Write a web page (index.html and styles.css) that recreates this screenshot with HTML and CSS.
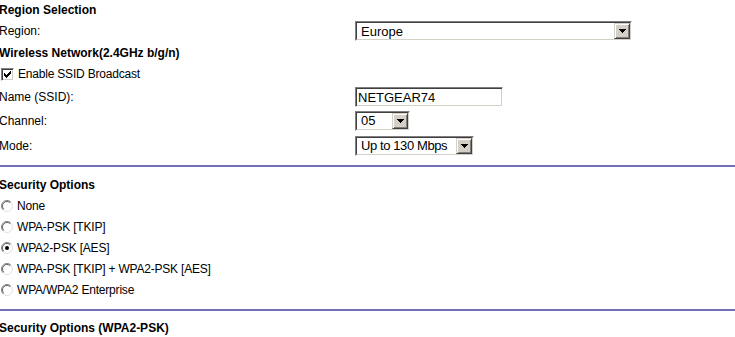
FILE: index.html
```html
<!DOCTYPE html>
<html lang="en">
<head>
  <meta charset="UTF-8">
  <title>Wireless Settings</title>
  <link rel="stylesheet" href="styles.css">
</head>
<body>

  <div class="page">
    <div class="row head r-1">Region Selection</div>
    <div class="row r-2">
      <span class="label">Region:</span>
      <div class="combo combo-region">
        <div class="combo-inner">
          <span class="combo-value big">Europe</span>
          <span class="combo-btn">
            <svg width="7" height="4" viewBox="0 0 7 4"><path d="M0 0h7v1h-1v1h-1v1h-1v1h-1v-1h-1v-1h-1v-1h-1z" fill="#000"/></svg>
          </span>
        </div>
      </div>
    </div>
    <div class="row head r-3">Wireless Network(2.4GHz b/g/n)</div>
    <div class="row r-4">
      <span class="check">
        <svg width="7" height="7" viewBox="0 0 7 7"><path d="M6 0h1v1h-1z M5 1h2v1h-2z M0 2h1v1h-1z M4 2h3v1h-3z M0 3h2v1h-2z M3 3h3v1h-3z M0 4h5v1h-5z M1 5h3v1h-3z M2 6h1v1h-1z" fill="#000"/></svg>
      </span>
      <span class="opt-text">Enable SSID Broadcast</span>
    </div>
    <div class="row r-5">
      <span class="label">Name (SSID):</span>
      <input class="text-box" type="text" value="NETGEAR74" readonly>
    </div>
    <div class="row r-6">
      <span class="label">Channel:</span>
      <div class="combo combo-channel">
        <div class="combo-inner">
          <span class="combo-value big">05</span>
          <span class="combo-btn">
            <svg width="7" height="4" viewBox="0 0 7 4"><path d="M0 0h7v1h-1v1h-1v1h-1v1h-1v-1h-1v-1h-1v-1h-1z" fill="#000"/></svg>
          </span>
        </div>
      </div>
    </div>
    <div class="row r-7">
      <span class="label">Mode:</span>
      <div class="combo combo-mode">
        <div class="combo-inner">
          <span class="combo-value big tight">Up to 130 Mbps</span>
          <span class="combo-btn">
            <svg width="7" height="4" viewBox="0 0 7 4"><path d="M0 0h7v1h-1v1h-1v1h-1v1h-1v-1h-1v-1h-1v-1h-1z" fill="#000"/></svg>
          </span>
        </div>
      </div>
    </div>

    <div class="rule rule-1"></div>

    <div class="row head r-sec">Security Options</div>
    <div class="row radio-row">
      <svg class="radio" width="12" height="12" viewBox="0 0 12 12">
        <circle cx="6" cy="6" r="5.5" fill="#fff"/>
        <path d="M2.1 9.9A5.5 5.5 0 0 1 9.9 2.1" stroke="#808080" fill="none"/>
        <path d="M9.9 2.1A5.5 5.5 0 0 1 2.1 9.9" stroke="#e4e2dc" fill="none"/>
        <path d="M2.8 9.2A4.5 4.5 0 0 1 9.2 2.8" stroke="#404040" fill="none" stroke-width="0.8"/>
      </svg>
      <span class="opt-text">None</span>
    </div>
    <div class="row radio-row">
      <svg class="radio" width="12" height="12" viewBox="0 0 12 12">
        <circle cx="6" cy="6" r="5.5" fill="#fff"/>
        <path d="M2.1 9.9A5.5 5.5 0 0 1 9.9 2.1" stroke="#808080" fill="none"/>
        <path d="M9.9 2.1A5.5 5.5 0 0 1 2.1 9.9" stroke="#e4e2dc" fill="none"/>
        <path d="M2.8 9.2A4.5 4.5 0 0 1 9.2 2.8" stroke="#404040" fill="none" stroke-width="0.8"/>
      </svg>
      <span class="opt-text">WPA-PSK [TKIP]</span>
    </div>
    <div class="row radio-row">
      <svg class="radio" width="12" height="12" viewBox="0 0 12 12">
        <circle cx="6" cy="6" r="5.5" fill="#fff"/>
        <path d="M2.1 9.9A5.5 5.5 0 0 1 9.9 2.1" stroke="#808080" fill="none"/>
        <path d="M9.9 2.1A5.5 5.5 0 0 1 2.1 9.9" stroke="#e4e2dc" fill="none"/>
        <path d="M2.8 9.2A4.5 4.5 0 0 1 9.2 2.8" stroke="#404040" fill="none" stroke-width="0.8"/>
        <circle cx="6" cy="6" r="2" fill="#000"/>
      </svg>
      <span class="opt-text">WPA2-PSK [AES]</span>
    </div>
    <div class="row radio-row">
      <svg class="radio" width="12" height="12" viewBox="0 0 12 12">
        <circle cx="6" cy="6" r="5.5" fill="#fff"/>
        <path d="M2.1 9.9A5.5 5.5 0 0 1 9.9 2.1" stroke="#808080" fill="none"/>
        <path d="M9.9 2.1A5.5 5.5 0 0 1 2.1 9.9" stroke="#e4e2dc" fill="none"/>
        <path d="M2.8 9.2A4.5 4.5 0 0 1 9.2 2.8" stroke="#404040" fill="none" stroke-width="0.8"/>
      </svg>
      <span class="opt-text">WPA-PSK [TKIP] + WPA2-PSK [AES]</span>
    </div>
    <div class="row radio-row">
      <svg class="radio" width="12" height="12" viewBox="0 0 12 12">
        <circle cx="6" cy="6" r="5.5" fill="#fff"/>
        <path d="M2.1 9.9A5.5 5.5 0 0 1 9.9 2.1" stroke="#808080" fill="none"/>
        <path d="M9.9 2.1A5.5 5.5 0 0 1 2.1 9.9" stroke="#e4e2dc" fill="none"/>
        <path d="M2.8 9.2A4.5 4.5 0 0 1 9.2 2.8" stroke="#404040" fill="none" stroke-width="0.8"/>
      </svg>
      <span class="opt-text">WPA/WPA2 Enterprise</span>
    </div>

    <div class="rule rule-2"></div>

    <div class="row head r-last">Security Options (WPA2-PSK)</div>
  </div>

</body>
</html>
```

FILE: styles.css
```css
body {
  margin: 0;
  background-color: #ffffff;
}

.page {
  font-family: "Liberation Sans", Arial, sans-serif;
  font-size: 12px;
  color: #000000;
  margin-left: -1px;
}

.row {
  display: flex;
  align-items: center;
}

.head {
  font-weight: bold;
}

.r-1 { height: 19px; }
.r-2 { height: 24px; }
.r-3 { height: 19px; }
.r-4 { height: 24px; }
.r-5 { height: 22px; }
.r-6 { height: 25px; }
.r-7 { height: 25px; }

.label {
  width: 356px;
  flex-shrink: 0;
}

.check {
  width: 13px;
  height: 13px;
  box-sizing: border-box;
  margin-left: 2px;
  background-color: #ffffff;
  border: 1px solid;
  border-color: #808080 #ffffff #ffffff #808080;
  box-shadow: inset 1px 1px #404040, inset -1px -1px #d4d0c8;
  display: flex;
  align-items: center;
  justify-content: center;
}

.opt-text {
  margin-left: 4px;
  letter-spacing: -0.2px;
}

.radio {
  margin-left: 2px;
  flex-shrink: 0;
}

.radio-row {
  height: 21px;
}

.rule {
  height: 2px;
  background-color: #7470b5;
}

.rule-1 { margin-top: 7px; }
.rule-2 { margin-top: 9px; }

.r-sec {
  height: 20px;
  margin-top: 8px;
}

.r-last {
  height: 20px;
  margin-top: 7px;
}

/* classic combo box */
.combo {
  height: 20px;
  box-sizing: border-box;
  border: 1px solid;
  border-color: #808080 #ffffff #ffffff #808080;
  background-color: #ffffff;
}

.combo-inner {
  height: 100%;
  box-sizing: border-box;
  border: 1px solid;
  border-color: #404040 #d4d0c8 #d4d0c8 #404040;
  display: flex;
  align-items: center;
}

.combo-value {
  flex: 1;
  padding-left: 4px;
  font-size: 12px;
  white-space: nowrap;
  overflow: hidden;
}

.combo-value.big {
  font-size: 13px;
}

.combo-value.tight {
  letter-spacing: -0.4px;
}

.combo-btn {
  width: 16px;
  height: 16px;
  box-sizing: border-box;
  flex-shrink: 0;
  background-color: #d4d0c8;
  border: 1px solid;
  border-color: #d4d0c8 #404040 #404040 #d4d0c8;
  box-shadow: inset 1px 1px #ffffff, inset -1px -1px #808080;
  display: flex;
  align-items: center;
  justify-content: center;
}

.combo-region { width: 277px; }
.combo-channel { width: 55px; }
.combo-mode { width: 119px; }

.text-box {
  width: 148px;
  height: 20px;
  box-sizing: border-box;
  margin: 0;
  padding: 0 2px;
  font-family: "Liberation Sans", Arial, sans-serif;
  font-size: 13px;
  color: #000000;
  border: 1px solid;
  border-color: #808080 #ffffff #ffffff #808080;
  box-shadow: inset 1px 1px #404040, inset -1px -1px #d4d0c8;
  outline: none;
}
```
